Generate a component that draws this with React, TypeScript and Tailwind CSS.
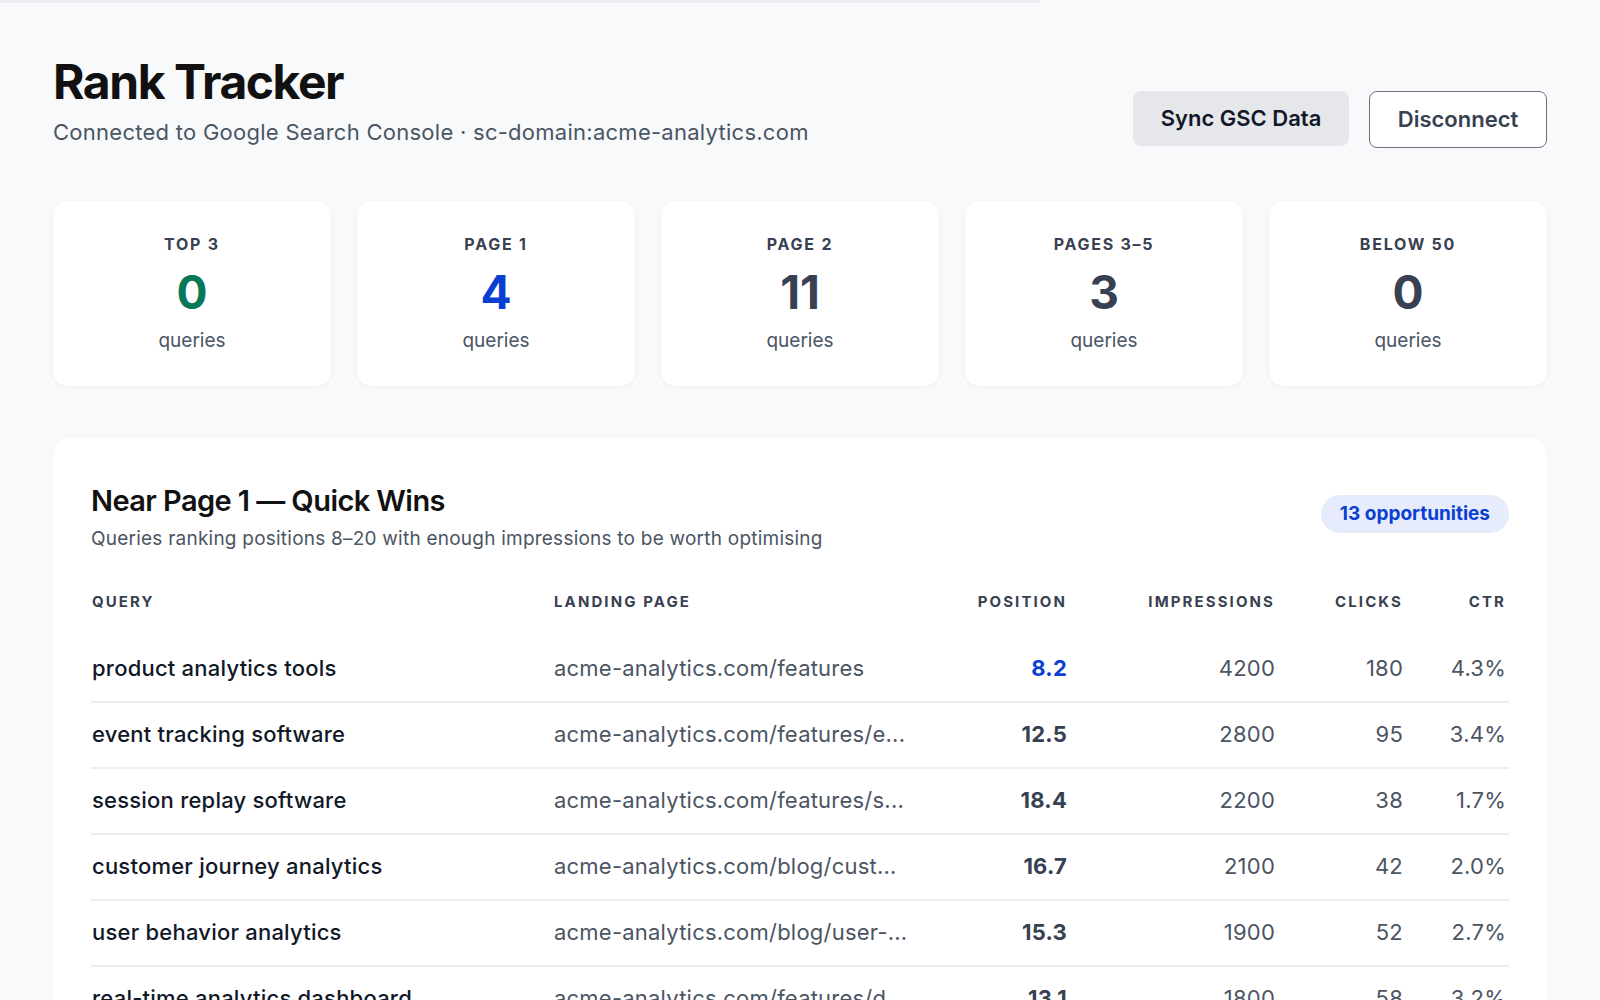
import React from "react";

const stats = [
  { label: "TOP 3", value: "0", color: "text-[#047857]" },
  { label: "PAGE 1", value: "4", color: "text-[#0b3fd1]" },
  { label: "PAGE 2", value: "11", color: "text-[#374151]" },
  { label: "PAGES 3–5", value: "3", color: "text-[#374151]" },
  { label: "BELOW 50", value: "0", color: "text-[#374151]" },
];

const rows = [
  { q: "product analytics tools", p: "acme-analytics.com/features", pos: "8.2", blue: true, imp: "4200", clicks: "180", ctr: "4.3%" },
  { q: "event tracking software", p: "acme-analytics.com/features/e...", pos: "12.5", imp: "2800", clicks: "95", ctr: "3.4%" },
  { q: "session replay software", p: "acme-analytics.com/features/s...", pos: "18.4", imp: "2200", clicks: "38", ctr: "1.7%" },
  { q: "customer journey analytics", p: "acme-analytics.com/blog/cust...", pos: "16.7", imp: "2100", clicks: "42", ctr: "2.0%" },
  { q: "user behavior analytics", p: "acme-analytics.com/blog/user-...", pos: "15.3", imp: "1900", clicks: "52", ctr: "2.7%" },
  { q: "real-time analytics dashboard", p: "acme-analytics.com/features/d...", pos: "13.1", imp: "1800", clicks: "58", ctr: "3.2%" },
];

const grid = "grid grid-cols-[463px_375px_138px_208px_128px_105px]";

export default function App() {
  return (
    <div className="h-[1000px] overflow-hidden bg-[#f8f9fb] text-[#111827]" style={{ fontFamily: "Inter, 'Noto Sans', sans-serif" }}>
      <div className="h-[3px] w-[1041px] bg-[#eceef1]" />
      <div className="px-[53px] pt-[53px]">
        <div className="flex items-start justify-between">
          <div>
            <h1 className="text-[48px] font-bold leading-[1.1] tracking-[-0.03em] text-[#111111]">Rank Tracker</h1>
            <p className="mt-[9px] text-[22px] leading-[1.3] tracking-[0.012em] text-[#4b5563]">
              Connected to Google Search Console · sc-domain:acme-analytics.com
            </p>
          </div>
          <div className="mt-[35px] flex gap-[20px]">
            <button className="h-[55px] w-[216px] rounded-[8px] bg-[#e5e7eb] text-[22px] font-semibold text-[#111827]">
              Sync GSC Data
            </button>
            <button className="h-[57px] w-[178px] rounded-[8px] border-[1.5px] border-[#6b7280] bg-white text-[22px] font-semibold text-[#374151]">
              Disconnect
            </button>
          </div>
        </div>

        <div className="mt-[53px] grid grid-cols-5 gap-[26px]">
          {stats.map((s) => (
            <div
              key={s.label}
              className="flex h-[185px] flex-col items-center justify-center rounded-[14px] bg-white shadow-[0_1px_3px_rgba(0,0,0,0.06)]"
            >
              <div className="text-[16px] font-bold tracking-[0.11em] text-[#374151]">{s.label}</div>
              <div className={`mt-[11px] text-[46px] font-bold leading-[1.1] ${s.color}`}>{s.value}</div>
              <div className="mt-[9px] text-[19px] text-[#4b5563]">queries</div>
            </div>
          ))}
        </div>

        <div className="mt-[52px] rounded-[18px] bg-white px-[38px] pt-[45px] shadow-[0_1px_3px_rgba(0,0,0,0.05)]">
          <div className="flex items-start justify-between">
            <div>
              <h2 className="text-[29px] font-semibold leading-[1.25] tracking-[-0.02em] text-[#111111]">
                Near Page 1 — Quick Wins
              </h2>
              <p className="mt-[6px] text-[19px] tracking-[0.012em] text-[#4b5563]">
                Queries ranking positions 8–20 with enough impressions to be worth optimising
              </p>
            </div>
            <div className="mt-[12px] flex h-[38px] items-center rounded-full bg-[#e6ecfb] px-[19px] text-[19px] font-bold text-[#0b3fd1]">
              13 opportunities
            </div>
          </div>

          <div className="mt-[37px]">
            <div className={`${grid} h-[46px] items-start text-[15px] font-bold tracking-[0.14em] text-[#374151]`}>
              <div className="pl-[1px]">QUERY</div>
              <div>LANDING PAGE</div>
              <div className="text-right">POSITION</div>
              <div className="text-right">IMPRESSIONS</div>
              <div className="text-right">CLICKS</div>
              <div className="pr-[2px] text-right">CTR</div>
            </div>
            {rows.map((r) => (
              <div key={r.q} className={`${grid} h-[66px] items-center border-b-2 border-[#eceef1] text-[22px] tracking-[0.01em]`}>
                <div className="pl-[1px] font-medium text-[#111827]">{r.q}</div>
                <div className="text-[#4b5563]">{r.p}</div>
                <div className={`text-right font-bold ${r.blue ? "text-[#0b3fd1]" : "text-[#374151]"}`}>{r.pos}</div>
                <div className="text-right text-[#4b5563]">{r.imp}</div>
                <div className="text-right text-[#4b5563]">{r.clicks}</div>
                <div className="pr-[2px] text-right text-[#4b5563]">{r.ctr}</div>
              </div>
            ))}
          </div>
        </div>
      </div>
    </div>
  );
}
